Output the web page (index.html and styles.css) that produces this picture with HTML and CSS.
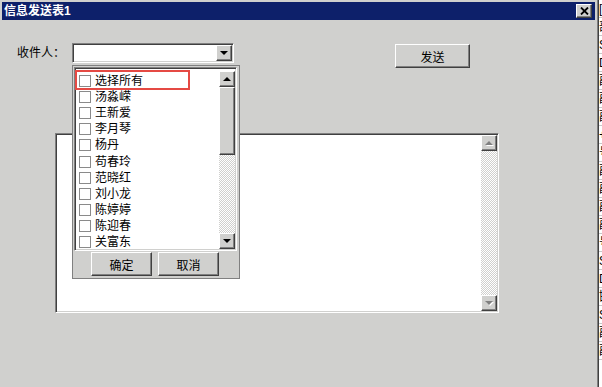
FILE: index.html
```html
<!DOCTYPE html>
<html lang="zh-cn">

<head>
    <meta charset="UTF-8">
    <title>信息发送表1</title>
    <link rel="stylesheet" href="styles.css">
</head>

<body>
    <main class="window">
        <div class="titlebar">
            <span class="title">信息发送表1</span>
            <button class="close">
                <svg width="9" height="8" viewBox="0 0 9 8">
                    <path d="M1 0.5 L8 7.5 M8 0.5 L1 7.5" stroke="#000" stroke-width="1.8" />
                </svg>
            </button>
        </div>
        <div class="form">
            <div class="row">
                <span class="label">收件人：</span>
                <div class="combo">
                    <div class="field"></div>
                    <span class="drop"><i class="arrow_down"></i></span>
                    <div class="panel">
                        <div class="list">
                            <div class="items">
                                <div class="item"><span class="check"></span>选择所有</div>
                                <div class="item"><span class="check"></span>汤淼嵘</div>
                                <div class="item"><span class="check"></span>王新爱</div>
                                <div class="item"><span class="check"></span>李月琴</div>
                                <div class="item"><span class="check"></span>杨丹</div>
                                <div class="item"><span class="check"></span>苟春玲</div>
                                <div class="item"><span class="check"></span>范晓红</div>
                                <div class="item"><span class="check"></span>刘小龙</div>
                                <div class="item"><span class="check"></span>陈婷婷</div>
                                <div class="item"><span class="check"></span>陈迎春</div>
                                <div class="item"><span class="check"></span>关富东</div>
                            </div>
                            <div class="scrollbar">
                                <span class="sb_btn"><i class="arrow_up"></i></span>
                                <span class="thumb"></span>
                                <span class="track"></span>
                                <span class="sb_btn"><i class="arrow_down"></i></span>
                            </div>
                        </div>
                        <div class="panel_buttons">
                            <button class="btn">确定</button>
                            <button class="btn">取消</button>
                        </div>
                        <div class="mark"></div>
                    </div>
                </div>
                <button class="btn send">发送</button>
            </div>
            <div class="memo">
                <div class="memo_text"></div>
                <div class="scrollbar">
                    <span class="sb_btn"><i class="arrow_up off"></i></span>
                    <span class="track"></span>
                    <span class="sb_btn"><i class="arrow_down off"></i></span>
                </div>
            </div>
        </div>
    </main>
    <div class="desk">
        <div class="desk_row">[</div>
        <div class="desk_row">部</div>
        <div class="desk_row">S</div>
        <div class="desk_row">D</div>
        <div class="desk_row">副</div>
        <div class="desk_row">副</div>
        <div class="desk_row">副</div>
        <div class="desk_row">+</div>
        <div class="desk_row">号</div>
        <div class="desk_row">副</div>
        <div class="desk_row">副</div>
        <div class="desk_row">副</div>
        <div class="desk_row">副</div>
        <div class="desk_row">号</div>
        <div class="desk_row">S</div>
        <div class="desk_row">D</div>
        <div class="desk_row">邯</div>
        <div class="desk_row">S</div>
        <div class="desk_row">副</div>
        <div class="desk_row">副</div>
    </div>
</body>

</html>
```

FILE: styles.css
```css
html, body {
    margin: 0;
    padding: 0;
}

body {
    width: 602px;
    height: 387px;
    overflow: hidden;
    display: flex;
    background-color: #fff;
    font-family: "Liberation Sans", "Noto Sans CJK SC", sans-serif;
    font-size: 12px;
    color: #000;
}

.window {
    width: 599px;
    height: 387px;
    box-sizing: border-box;
    padding: 2px 2px 0 2px;
    background-color: #d0d0ce;
    border-right: 1px solid #404040;
    box-shadow: inset -1px 0 #808080;
}

.titlebar {
    height: 18px;
    width: 593px;
    background-color: #0d206a;
    display: flex;
    align-items: center;
    justify-content: space-between;
    padding: 0 2px;
    box-sizing: border-box;
}

.titlebar .title {
    color: #fff;
    font-weight: bold;
    font-size: 12px;
    line-height: 18px;
}

.close {
    width: 16px;
    height: 14px;
    padding: 0;
    margin-right: 1px;
    background-color: #d0d0ce;
    border: 1px solid;
    border-color: #fff #404040 #404040 #fff;
    box-shadow: inset -1px -1px #808080;
    display: flex;
    align-items: center;
    justify-content: center;
}

.form {
    padding: 23px 0 0 15px;
}

.row {
    display: flex;
    height: 24px;
    align-items: flex-start;
}

.label {
    width: 55px;
    line-height: 20px;
}

.combo {
    position: relative;
    width: 162px;
    height: 20px;
    box-sizing: border-box;
    border: 1px solid;
    border-color: #808080 #fff #fff #808080;
    box-shadow: inset 1px 1px #404040, inset -1px -1px #d0d0ce;
    background-color: #fff;
    display: flex;
    padding: 1px;
}

.combo .field {
    flex: 1;
}

.combo .drop, .sb_btn {
    width: 16px;
    height: 16px;
    box-sizing: border-box;
    background-color: #d0d0ce;
    border: 1px solid;
    border-color: #fff #404040 #404040 #fff;
    box-shadow: inset -1px -1px #808080;
    display: flex;
    align-items: center;
    justify-content: center;
}

.arrow_down, .arrow_up {
    width: 0;
    height: 0;
    border-left: 4px solid transparent;
    border-right: 4px solid transparent;
}

.arrow_down {
    border-top: 4px solid #000;
}

.arrow_up {
    border-bottom: 4px solid #000;
}

.arrow_down.off {
    border-top-color: #808080;
    filter: drop-shadow(1px 1px 0 #fff);
}

.arrow_up.off {
    border-bottom-color: #808080;
    filter: drop-shadow(1px 1px 0 #fff);
}

.panel {
    position: absolute;
    left: -1px;
    top: 21px;
    width: 168px;
    height: 214px;
    box-sizing: border-box;
    border: 1px solid #808080;
    background-color: #d0d0ce;
    padding: 1px;
    z-index: 2;
}

.list {
    width: 163px;
    height: 184px;
    box-sizing: border-box;
    border: 1px solid;
    border-color: #808080 #fff #fff #808080;
    box-shadow: inset 1px 1px #404040, inset -1px -1px #d0d0ce;
    background-color: #fff;
    padding: 1px;
    display: flex;
}

.items {
    flex: 1;
    overflow: hidden;
    padding: 4px 0 0 3px;
}

.item {
    height: 16.1px;
    display: flex;
    align-items: center;
    line-height: 16px;
}

.check {
    width: 12px;
    height: 12px;
    box-sizing: border-box;
    border: 1px solid #8a8a8a;
    margin-right: 4px;
}

.scrollbar {
    width: 16px;
    display: flex;
    flex-direction: column;
}

.list .scrollbar {
    margin-top: 2px;
}

.thumb {
    height: 68px;
    box-sizing: border-box;
    background-color: #d0d0ce;
    border: 1px solid;
    border-color: #fff #404040 #404040 #fff;
    box-shadow: inset -1px -1px #808080;
}

.track {
    flex: 1;
    background: repeating-conic-gradient(#d0d0ce 0 25%, #fff 0 50%) 0 0 / 2px 2px;
}

.panel_buttons {
    display: flex;
    gap: 6px;
    padding: 1px 0 0 17px;
}

.btn {
    width: 61px;
    height: 24px;
    padding: 0;
    box-sizing: border-box;
    font-family: "Liberation Sans", "Noto Sans CJK SC", sans-serif;
    font-size: 12px;
    color: #000;
    background-color: #d0d0ce;
    border: 1px solid;
    border-color: #fff #404040 #404040 #fff;
    box-shadow: inset -1px -1px #808080;
}

.mark {
    position: absolute;
    left: 2px;
    top: 4px;
    width: 115px;
    height: 20px;
    box-sizing: border-box;
    border: 2px solid #e54a44;
}

.send {
    width: 75px;
    margin: 1px 0 0 161px;
}

.memo {
    margin: 66px 0 0 38px;
    width: 444px;
    height: 180px;
    box-sizing: border-box;
    border: 1px solid;
    border-color: #808080 #fff #fff #808080;
    box-shadow: inset 1px 1px #404040, inset -1px -1px #d0d0ce;
    background-color: #fff;
    padding: 1px;
    display: flex;
}

.memo_text {
    flex: 1;
}

.desk {
    flex: 1;
    overflow: hidden;
    padding-top: 0;
}

.desk_row {
    height: 20px;
    box-sizing: border-box;
    border-bottom: 1px solid #c8c8c8;
    line-height: 18px;
    font-size: 12px;
    white-space: nowrap;
    margin-top: -2px;
    padding-top: 2px;
}
```
